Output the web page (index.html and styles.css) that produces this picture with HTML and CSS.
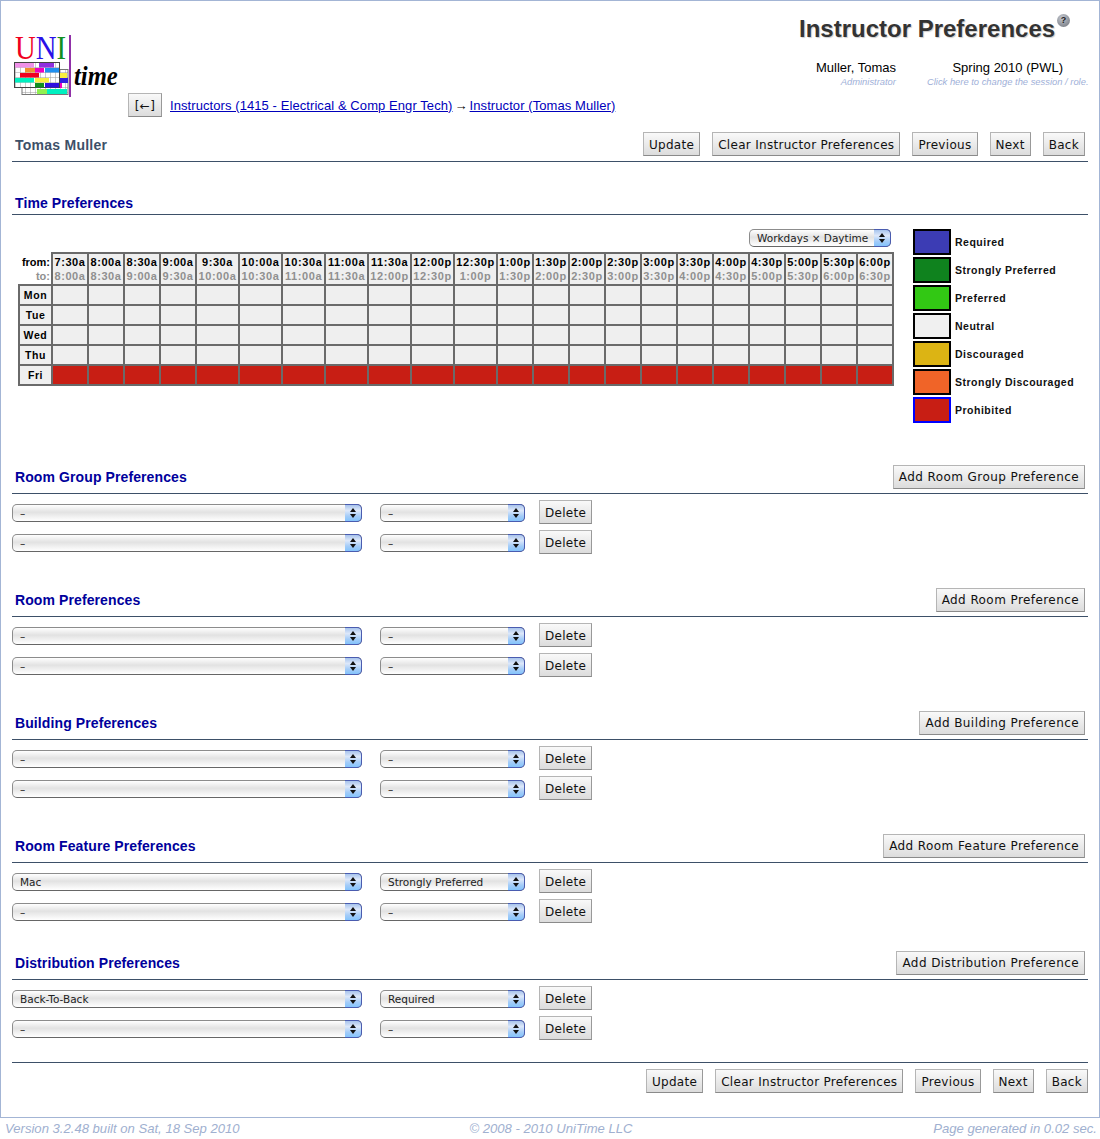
FILE: index.html
```html
<!DOCTYPE html>
<html lang="en">
<head>
  <meta charset="UTF-8">
  <title>Instructor Preferences</title>
  <link rel="stylesheet" href="styles.css">
</head>
<body>
  <div class="frame">
    <div class="top">
      <div class="brand">
        <svg class="logo" viewBox="14 25 110 74" width="110" height="74">
          <defs>
            <pattern id="cells" x="15" y="62" width="5" height="5" patternUnits="userSpaceOnUse">
              <path d="M5 0H0V5" fill="none" stroke="#999" stroke-width="1"/>
            </pattern>
          </defs>
          <rect x="22" y="69.5" width="46" height="25" fill="url(#cells)" stroke="#777"/>
          <rect x="60" y="73" width="7" height="5" fill="#f8f040"/>
          <rect x="60" y="78" width="8" height="5" fill="#3020e0"/>
          <rect x="53" y="83" width="9" height="5" fill="#f000c0"/>
          <rect x="37" y="89" width="10" height="5" fill="#90f050"/>
          <rect x="47" y="89" width="20" height="5" fill="#00f0c0"/>
          <rect x="14.5" y="62.5" width="45" height="25" fill="#fff"/>
          <rect x="14.5" y="62.5" width="45" height="25" fill="url(#cells)" stroke="#444"/>
          <rect x="15" y="63" width="19" height="4.5" fill="#f090e8"/>
          <rect x="39" y="63" width="15" height="4.5" fill="#9030e0"/>
          <rect x="25" y="68" width="10" height="4.5" fill="#f09030"/>
          <rect x="35" y="68" width="9" height="4.5" fill="#f000c0"/>
          <rect x="45" y="68" width="14" height="4.5" fill="#2090f0"/>
          <rect x="20" y="73" width="19" height="4.5" fill="#f00020"/>
          <rect x="15" y="78" width="19" height="4.5" fill="#00f0c0"/>
          <rect x="35" y="78" width="14" height="4.5" fill="#f8f040"/>
          <rect x="35" y="83" width="9" height="4.5" fill="#109020"/>
          <rect x="45" y="83" width="14" height="4.5" fill="#3010e0"/>
          <rect x="69" y="35" width="2" height="62" fill="#9030a8"/>
          <text class="logo-uni" transform="translate(15 59) scale(.845 1)"><tspan fill="#f00020">U</tspan><tspan fill="#2a10e8">N</tspan><tspan fill="#109020">I</tspan></text>
          <text class="logo-time" transform="translate(74 85) scale(.88 1)">time</text>
        </svg>
        <nav class="crumbs">
          <button class="btn btn-back">[←]</button>
          <a href="#">Instructors (1415 - Electrical &amp; Comp Engr Tech)</a>
          <span class="arrow">→</span>
          <a href="#">Instructor (Tomas Muller)</a>
        </nav>
      </div>
      <div class="head-right">
        <h1>Instructor Preferences<span class="help">?</span></h1>
        <div class="who">
          <div class="who-user">
            <div>Muller, Tomas</div>
            <small>Administrator</small>
          </div>
          <div class="who-session">
            <div>Spring 2010 (PWL)</div>
            <small>Click here to change the session / role.</small>
          </div>
        </div>
      </div>
    </div>

    <div class="section-head name-head">
      <span class="name">Tomas Muller</span>
      <div class="actions">
        <button class="btn">Update</button>
        <button class="btn">Clear Instructor Preferences</button>
        <button class="btn">Previous</button>
        <button class="btn">Next</button>
        <button class="btn">Back</button>
      </div>
    </div>

    <div class="section-head time-head">
      <h2>Time Preferences</h2>
    </div>
    <div class="time-body">
      <div class="time-left">
        <div class="pattern-pick">
          <div class="select select-pattern">Workdays × Daytime<span class="cap"></span></div>
        </div>
        <table class="grid">
          <thead>
            <tr>
              <th class="corner"><span>from:</span><span class="to">to:</span></th>
              <th><span>7:30a</span><span class="to">8:00a</span></th>
              <th><span>8:00a</span><span class="to">8:30a</span></th>
              <th><span>8:30a</span><span class="to">9:00a</span></th>
              <th><span>9:00a</span><span class="to">9:30a</span></th>
              <th class="wide"><span>9:30a</span><span class="to">10:00a</span></th>
              <th class="wide"><span>10:00a</span><span class="to">10:30a</span></th>
              <th class="wide"><span>10:30a</span><span class="to">11:00a</span></th>
              <th class="wide"><span>11:00a</span><span class="to">11:30a</span></th>
              <th class="wide"><span>11:30a</span><span class="to">12:00p</span></th>
              <th class="wide"><span>12:00p</span><span class="to">12:30p</span></th>
              <th class="wide"><span>12:30p</span><span class="to">1:00p</span></th>
              <th><span>1:00p</span><span class="to">1:30p</span></th>
              <th><span>1:30p</span><span class="to">2:00p</span></th>
              <th><span>2:00p</span><span class="to">2:30p</span></th>
              <th><span>2:30p</span><span class="to">3:00p</span></th>
              <th><span>3:00p</span><span class="to">3:30p</span></th>
              <th><span>3:30p</span><span class="to">4:00p</span></th>
              <th><span>4:00p</span><span class="to">4:30p</span></th>
              <th><span>4:30p</span><span class="to">5:00p</span></th>
              <th><span>5:00p</span><span class="to">5:30p</span></th>
              <th><span>5:30p</span><span class="to">6:00p</span></th>
              <th><span>6:00p</span><span class="to">6:30p</span></th>
            </tr>
          </thead>
          <tbody>
            <tr><th>Mon</th><td></td><td></td><td></td><td></td><td></td><td></td><td></td><td></td><td></td><td></td><td></td><td></td><td></td><td></td><td></td><td></td><td></td><td></td><td></td><td></td><td></td><td></td></tr>
            <tr><th>Tue</th><td></td><td></td><td></td><td></td><td></td><td></td><td></td><td></td><td></td><td></td><td></td><td></td><td></td><td></td><td></td><td></td><td></td><td></td><td></td><td></td><td></td><td></td></tr>
            <tr><th>Wed</th><td></td><td></td><td></td><td></td><td></td><td></td><td></td><td></td><td></td><td></td><td></td><td></td><td></td><td></td><td></td><td></td><td></td><td></td><td></td><td></td><td></td><td></td></tr>
            <tr><th>Thu</th><td></td><td></td><td></td><td></td><td></td><td></td><td></td><td></td><td></td><td></td><td></td><td></td><td></td><td></td><td></td><td></td><td></td><td></td><td></td><td></td><td></td><td></td></tr>
            <tr class="prohibited"><th>Fri</th><td></td><td></td><td></td><td></td><td></td><td></td><td></td><td></td><td></td><td></td><td></td><td></td><td></td><td></td><td></td><td></td><td></td><td></td><td></td><td></td><td></td><td></td></tr>
          </tbody>
        </table>
      </div>
      <ul class="legend">
        <li><span class="swatch sw-required"></span>Required</li>
        <li><span class="swatch sw-strong"></span>Strongly Preferred</li>
        <li><span class="swatch sw-preferred"></span>Preferred</li>
        <li><span class="swatch sw-neutral"></span>Neutral</li>
        <li><span class="swatch sw-discouraged"></span>Discouraged</li>
        <li><span class="swatch sw-strong-disc"></span>Strongly Discouraged</li>
        <li><span class="swatch sw-prohibited"></span>Prohibited</li>
      </ul>
    </div>

    <section class="pref first">
      <div class="section-head">
        <h2>Room Group Preferences</h2>
        <button class="btn">Add Room Group Preference</button>
      </div>
      <div class="pref-row"><div class="select select-long">–<span class="cap"></span></div><div class="select select-level">–<span class="cap"></span></div><button class="btn">Delete</button></div>
      <div class="pref-row"><div class="select select-long">–<span class="cap"></span></div><div class="select select-level">–<span class="cap"></span></div><button class="btn">Delete</button></div>
    </section>

    <section class="pref">
      <div class="section-head">
        <h2>Room Preferences</h2>
        <button class="btn">Add Room Preference</button>
      </div>
      <div class="pref-row"><div class="select select-long">–<span class="cap"></span></div><div class="select select-level">–<span class="cap"></span></div><button class="btn">Delete</button></div>
      <div class="pref-row"><div class="select select-long">–<span class="cap"></span></div><div class="select select-level">–<span class="cap"></span></div><button class="btn">Delete</button></div>
    </section>

    <section class="pref">
      <div class="section-head">
        <h2>Building Preferences</h2>
        <button class="btn">Add Building Preference</button>
      </div>
      <div class="pref-row"><div class="select select-long">–<span class="cap"></span></div><div class="select select-level">–<span class="cap"></span></div><button class="btn">Delete</button></div>
      <div class="pref-row"><div class="select select-long">–<span class="cap"></span></div><div class="select select-level">–<span class="cap"></span></div><button class="btn">Delete</button></div>
    </section>

    <section class="pref">
      <div class="section-head">
        <h2>Room Feature Preferences</h2>
        <button class="btn">Add Room Feature Preference</button>
      </div>
      <div class="pref-row"><div class="select select-long">Mac<span class="cap"></span></div><div class="select select-level">Strongly Preferred<span class="cap"></span></div><button class="btn">Delete</button></div>
      <div class="pref-row"><div class="select select-long">–<span class="cap"></span></div><div class="select select-level">–<span class="cap"></span></div><button class="btn">Delete</button></div>
    </section>

    <section class="pref tight">
      <div class="section-head">
        <h2>Distribution Preferences</h2>
        <button class="btn">Add Distribution Preference</button>
      </div>
      <div class="pref-row"><div class="select select-long">Back-To-Back<span class="cap"></span></div><div class="select select-level">Required<span class="cap"></span></div><button class="btn">Delete</button></div>
      <div class="pref-row"><div class="select select-long">–<span class="cap"></span></div><div class="select select-level">–<span class="cap"></span></div><button class="btn">Delete</button></div>
    </section>

    <div class="actions bottom-actions">
      <button class="btn">Update</button>
      <button class="btn">Clear Instructor Preferences</button>
      <button class="btn">Previous</button>
      <button class="btn">Next</button>
      <button class="btn">Back</button>
    </div>
  </div>

  <footer class="foot">
    <span>Version 3.2.48 built on Sat, 18 Sep 2010</span>
    <span>© 2008 - 2010 UniTime LLC</span>
    <span class="foot-right">Page generated in 0.02 sec.</span>
  </footer>
</body>
</html>
```

FILE: styles.css
```css
html, body {
  margin: 0;
  padding: 0;
}
body {
  font-family: "Liberation Sans", Arial, sans-serif;
  background: #fff;
  color: #000;
  width: 1100px;
}
.frame {
  box-sizing: border-box;
  height: 1118px;
  border: 1px solid #a3b5d5;
  padding: 0 11px;
}

/* header */
.top {
  display: flex;
  justify-content: space-between;
  height: 116px;
}
.brand {
  display: flex;
  align-items: flex-end;
}
.logo {
  align-self: flex-start;
  margin-top: 24px;
  margin-left: 2px;
  margin-right: 4px;
  flex: none;
}
.logo-uni {
  font-family: "Liberation Serif", serif;
  font-size: 34px;
}
.logo-time {
  font-family: "Liberation Serif", serif;
  font-style: italic;
  font-weight: bold;
  font-size: 28px;
}
.crumbs {
  display: flex;
  align-items: center;
  gap: 2px;
  font-size: 13px;
  letter-spacing: 0.08px;
  height: 24px;
}
.crumbs a {
  color: #00b;
}
.btn-back {
  height: 24px;
  width: 34px;
  padding: 0;
  margin-right: 6px;
  font-size: 13px;
}
.head-right {
  width: 292px;
  margin-right: 10px;
}
h1 {
  position: relative;
  margin: 13px 0 0 13px;
  font-size: 24px;
  line-height: 30px;
  color: #333;
  white-space: nowrap;
  text-shadow: 1px 1px 1px #ccc;
}
.help {
  position: absolute;
  left: 258px;
  top: 0;
  width: 13px;
  height: 13px;
  border-radius: 50%;
  background: radial-gradient(circle at 40% 30%, #c4c8d0, #6c7078);
  color: #222;
  font-size: 9px;
  line-height: 13px;
  text-align: center;
  text-shadow: none;
}
.who {
  display: flex;
  margin-top: 16px;
  margin-left: 30px;
  font-size: 13px;
  line-height: 16px;
  white-space: nowrap;
}
small {
  display: block;
  margin-top: 1px;
  font-size: 9.4px;
  line-height: 9px;
  font-style: italic;
  color: #a0b0d8;
}
.who-user {
  width: 84px;
  text-align: right;
  margin-right: 31px;
}
.who-session {
  width: 164px;
  text-align: center;
}

/* section headings */
.section-head {
  display: flex;
  justify-content: space-between;
  align-items: flex-start;
  height: 28px;
  border-bottom: 1px solid #3d5068;
  padding-right: 3px;
}
.name-head {
  height: 29px;
  margin-top: 15px;
}
.name {
  font-size: 14px;
  line-height: 26px;
  font-weight: bold;
  letter-spacing: 0.25px;
  color: #3d5068;
  padding-left: 3px;
}
h2 {
  margin: 0;
  padding-left: 3px;
  font-size: 14px;
  line-height: 24px;
  letter-spacing: 0.1px;
  font-weight: bold;
  color: #00009c;
}
.time-head {
  height: 22px;
  padding-top: 2px;
  margin-top: 28px;
}
.time-head h2 {
  line-height: 22px;
}
.actions {
  display: flex;
  gap: 12px;
}
.btn {
  box-sizing: border-box;
  height: 24px;
  padding: 1px 5px 0;
  border: 1px solid #b5b5b5;
  border-bottom-color: #8a8a8a;
  border-right-color: #999;
  background: linear-gradient(#f9f9f9, #dcdcdc);
  font-family: "DejaVu Sans", sans-serif;
  font-size: 12px;
  letter-spacing: 0.3px;
  color: #111;
  white-space: nowrap;
}
.pref .section-head .btn {
  padding-top: 0;
  letter-spacing: 0.42px;
}

/* time grid */
.time-body {
  display: flex;
  padding-left: 6px;
  margin-top: 13px;
}
.time-left {
  width: 875px;
  margin-right: 20px;
}
.pattern-pick {
  display: flex;
  justify-content: flex-end;
  height: 24px;
  padding-top: 1px;
  padding-right: 2px;
  box-sizing: border-box;
}
.grid {
  table-layout: fixed;
  border-collapse: collapse;
  width: 874px;
  font-size: 11px;
  letter-spacing: 0.6px;
}
.grid th,
.grid td {
  border: 2px solid #6a6a6a;
  background: #efefef;
  padding: 0;
  width: 36px;
  height: 20px;
  box-sizing: border-box;
  text-align: center;
  font-weight: bold;
}
.grid thead th {
  height: 32px;
  line-height: 14px;
}
.grid thead th span {
  display: block;
  white-space: nowrap;
}
.grid .wide,
.grid thead .wide {
  width: 43px;
}
.grid .corner {
  width: 33px;
  background: #fff;
  border-top: 0;
  border-left: 0;
  text-align: right;
  padding-right: 1px;
  letter-spacing: 0;
}
.grid tbody th {
  width: 33px;
  font-size: 10.5px;
}
.to {
  color: #909090;
}
.grid .prohibited td {
  background: #c81e14;
}

/* legend */
.legend {
  list-style: none;
  margin: 0;
  padding: 0;
  font-size: 10.5px;
  font-weight: bold;
  letter-spacing: 0.5px;
  color: #111;
}
.legend li {
  display: flex;
  align-items: center;
  gap: 4px;
  height: 28px;
  white-space: nowrap;
}
.swatch {
  box-sizing: border-box;
  width: 38px;
  height: 26px;
  border: 2px solid #000;
}
.sw-required { background: #3c3cb4; }
.sw-strong { background: #0f821e; }
.sw-preferred { background: #32c814; }
.sw-neutral { background: #f0f0f0; }
.sw-discouraged { background: #dcb414; }
.sw-strong-disc { background: #f06428; }
.sw-prohibited { background: #c81e14; border-color: #00f; }

/* preference blocks */
.pref {
  margin-top: 33px;
}
.pref.first {
  margin-top: 41px;
}
.pref.tight {
  margin-top: 27px;
}
.pref-row {
  display: flex;
  align-items: center;
  height: 25px;
  margin-top: 5px;
}
.section-head + .pref-row {
  margin-top: 6px;
}
.pref-row .btn {
  align-self: flex-start;
}
.select {
  position: relative;
  box-sizing: border-box;
  height: 18px;
  border: 1px solid #8c8c8c;
  border-bottom-color: #666;
  border-radius: 5px;
  padding-left: 7px;
  background: linear-gradient(#fff, #e2e2e2 45%, #f2f2f2 75%, #fff);
  font-family: "DejaVu Sans", sans-serif;
  font-size: 10.5px;
  line-height: 16px;
  color: #222;
  white-space: nowrap;
}
.select-long {
  width: 350px;
  margin-right: 18px;
}
.select-level {
  width: 145px;
  margin-right: 14px;
}
.select-pattern {
  width: 142px;
}
.cap {
  position: absolute;
  top: -1px;
  right: -1px;
  bottom: -1px;
  width: 17px;
  border: 1px solid #4a5cb0;
  border-left: 0;
  border-radius: 0 5px 5px 0;
  box-sizing: border-box;
  background: linear-gradient(#a8c4ec, #dde8fa 35%, #a4ccf8 70%, #84c4fc);
}
.cap::before,
.cap::after {
  content: "";
  position: absolute;
  left: 5px;
  border-left: 3px solid transparent;
  border-right: 3px solid transparent;
}
.cap::before {
  top: 3px;
  border-bottom: 4px solid #111;
}
.cap::after {
  bottom: 3px;
  border-top: 4px solid #111;
}

/* bottom */
.bottom-actions {
  justify-content: flex-end;
  border-top: 1px solid #3d5068;
  margin-top: 21px;
  padding-top: 6px;
}
.foot {
  display: grid;
  grid-template-columns: 1fr auto 1fr;
  padding: 3px 3px 0 5px;
  font-size: 13.1px;
  font-style: italic;
  color: #a0b0d0;
}
.foot-right {
  text-align: right;
}
```
